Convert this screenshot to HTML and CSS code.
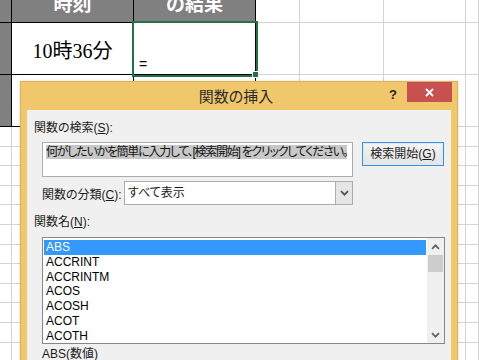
FILE: index.html
```html
<!DOCTYPE html>
<html lang="ja">
<head>
    <meta charset="UTF-8">
    <title>関数の挿入</title>
    <link rel="stylesheet" href="styles.css">
</head>
<body>
    <div class="screen">
        <div class="sheet">
            <div class="row row-head">
                <div class="cell c-a fill blk"></div>
                <div class="cell c-b fill blk head">時刻</div>
                <div class="cell c-c fill blk head">の結果</div>
                <div class="cell c-d"></div>
                <div class="cell c-e"></div>
                <div class="cell c-f"></div>
                <div class="cell c-g"></div>
            </div>
            <div class="row row-big">
                <div class="cell c-a fill blk"></div>
                <div class="cell c-b blk time">10時36分</div>
                <div class="cell c-c blk formula selected">=<span class="handle"></span></div>
                <div class="cell c-d"></div>
                <div class="cell c-e"></div>
                <div class="cell c-f"></div>
                <div class="cell c-g"></div>
            </div>
            <div class="row row-big">
                <div class="cell c-a fill blk"></div>
                <div class="cell c-b blk"></div>
                <div class="cell c-c blk"></div>
                <div class="cell c-d"></div>
                <div class="cell c-e"></div>
                <div class="cell c-f"></div>
                <div class="cell c-g"></div>
            </div>
            <div class="rows" id="rows"></div>
        </div>

        <div class="dialog">
            <div class="titlebar">
                <div class="title">関数の挿入</div>
                <div class="help">?</div>
                <div class="close">
                    <svg width="9" height="9" viewBox="0 0 9 9"><path d="M1 1L8 8M8 1L1 8" stroke="#fff" stroke-width="1.8" fill="none"/></svg>
                </div>
            </div>
            <div class="panel">
                <div class="label">関数の検索(<u>S</u>):</div>
                <div class="search-row">
                    <div class="search-box"><span class="picked">何がしたいかを簡単に入力して、[検索開始] をクリックしてください。</span></div>
                    <div class="btn">検索開始(<u>G</u>)</div>
                </div>
                <div class="cat-row">
                    <div class="cat-label">関数の分類(<u>C</u>):</div>
                    <div class="select">
                        <div class="select-text">すべて表示</div>
                        <div class="select-arrow">
                            <svg width="9" height="6" viewBox="0 0 9 6"><path d="M1 1.2L4.5 4.7L8 1.2" fill="none" stroke="#505050" stroke-width="1.7"/></svg>
                        </div>
                    </div>
                </div>
                <div class="label label-name">関数名(<u>N</u>):</div>
                <div class="listbox">
                    <ul class="items">
                        <li class="on">ABS</li>
                        <li>ACCRINT</li>
                        <li>ACCRINTM</li>
                        <li>ACOS</li>
                        <li>ACOSH</li>
                        <li>ACOT</li>
                        <li>ACOTH</li>
                    </ul>
                    <div class="scroll">
                        <div class="arrow">
                            <svg width="9" height="6" viewBox="0 0 9 6"><path d="M1 4.8L4.5 1.3L8 4.8" fill="none" stroke="#606060" stroke-width="1.7"/></svg>
                        </div>
                        <div class="thumb"></div>
                        <div class="track"></div>
                        <div class="arrow">
                            <svg width="9" height="6" viewBox="0 0 9 6"><path d="M1 1.2L4.5 4.7L8 1.2" fill="none" stroke="#606060" stroke-width="1.7"/></svg>
                        </div>
                    </div>
                </div>
                <div class="syntax">ABS(数値)</div>
            </div>
        </div>
    </div>

    <script>
        // plain grid rows below the bordered table
        const rows = document.getElementById('rows');
        const cols = ['c-a', 'c-b', 'c-c', 'c-d', 'c-e', 'c-f', 'c-g'];
        for (let i = 0; i < 13; i++) {
            rows.innerHTML += '<div class="row row-small">' +
                cols.map(c => `<div class="cell ${c}"></div>`).join('') + '</div>';
        }
    </script>
</body>
</html>
```

FILE: styles.css
```css
body {
    margin: 0;
    font-family: "Liberation Sans", "Noto Sans CJK JP", sans-serif;
    background: #fff;
}
.screen {
    position: relative;
    width: 479px;
    height: 360px;
    overflow: hidden;
}

/* spreadsheet */
.row {
    display: flex;
}
.row-head {
    height: 23px;
}
.row-big {
    height: 52px;
}
.row-small {
    height: 19.6px;
}
.cell {
    box-sizing: border-box;
    border-right: 1px solid #d4d4d4;
    border-bottom: 1px solid #d4d4d4;
    flex: none;
}
.c-a { width: 12px; }
.c-b { width: 122px; }
.c-c { width: 122px; }
.c-d { width: 44px; }
.c-e { width: 84px; }
.c-f { width: 82px; }
.c-g { flex: 1; }
.blk {
    border-color: #000;
}
.fill {
    background-color: #808080;
}
.head {
    color: #fff;
    font-family: "Noto Sans CJK JP", sans-serif;
    font-weight: 700;
    font-size: 19px;
    line-height: 6px;
    text-align: center;
    overflow: hidden;
}
.time {
    display: flex;
    align-items: center;
    justify-content: center;
    font-family: "Liberation Serif", "Noto Sans CJK JP", serif;
    font-size: 20px;
    color: #000;
    padding-top: 2px;
}
.formula {
    position: relative;
    display: flex;
    align-items: flex-end;
    padding: 0 0 2px 5px;
    font-size: 14px;
    color: #000;
}
.selected {
    outline: 2px solid #217346;
}
.handle {
    position: absolute;
    right: -4px;
    bottom: -4px;
    width: 5px;
    height: 5px;
    background-color: #217346;
    border: 1px solid #fff;
}

/* dialog */
.dialog {
    position: absolute;
    left: 20px;
    top: 81px;
    width: 438px;
    height: 300px;
    box-sizing: border-box;
    background-color: #f0c86b;
    border: 1px solid #dfb255;
    padding: 0 6px;
    box-shadow: 0 0 3px rgba(0, 0, 0, 0.15);
    font-family: "Liberation Sans", "Noto Sans CJK JP", sans-serif;
    font-size: 12px;
    font-feature-settings: "palt";
    color: #1a1a1a;
}
.titlebar {
    display: flex;
    align-items: flex-start;
    height: 28px;
}
.title {
    flex: 1;
    padding-left: 56px;
    text-align: center;
    font-family: "Noto Sans CJK JP", sans-serif;
    font-size: 15px;
    line-height: 28px;
    color: #2b2b2b;
}
.help {
    margin-right: 10px;
    font-weight: 700;
    font-size: 13px;
    line-height: 20px;
    padding-top: 3px;
    color: #222;
}
.close {
    width: 45px;
    height: 20px;
    margin-right: -1px;
    background-color: #c75050;
    display: flex;
    align-items: center;
    justify-content: center;
}
.panel {
    height: 260px;
    background-color: #f0f0f0;
    padding: 8px 7px 0;
}
.label {
    line-height: 20px;
}
.label-name {
    margin-top: 7px;
}
.search-row {
    display: flex;
    align-items: flex-start;
    margin: 4px 0 0 8px;
}
.search-box {
    box-sizing: border-box;
    width: 311px;
    height: 35px;
    border: 1px solid #acacac;
    background: #fff;
    padding: 2px 3px;
    line-height: 15px;
    white-space: nowrap;
    overflow: hidden;
}
.picked {
    background-color: #c8c8c8;
    color: #111;
    letter-spacing: -1.25px;
}
.btn {
    box-sizing: border-box;
    width: 82px;
    height: 24px;
    margin-left: 9px;
    border: 1px solid #3c8fd8;
    box-shadow: inset 0 0 0 1px #d8ecfb;
    background: linear-gradient(#f3f3f3, #e5e5e5);
    text-align: center;
    line-height: 22px;
}
.cat-row {
    display: flex;
    align-items: center;
    margin: 4px 0 0 8px;
}
.cat-label {
    width: 82px;
}
.select {
    box-sizing: border-box;
    display: flex;
    width: 229px;
    height: 24px;
    border: 1px solid #acacac;
    background: #fff;
}
.select-text {
    flex: 1;
    padding-left: 3px;
    line-height: 22px;
}
.select-arrow {
    box-sizing: border-box;
    width: 17px;
    border-left: 1px solid #acacac;
    background-color: #e6e6e6;
    display: flex;
    align-items: center;
    justify-content: center;
}
.listbox {
    box-sizing: border-box;
    display: flex;
    width: 403px;
    height: 107px;
    margin: 5px 0 0 8px;
    border: 1px solid #828790;
    background: #fff;
}
.items {
    flex: 1;
    list-style: none;
    margin: 0;
    padding: 2px 1px 0;
}
.items li {
    height: 14.75px;
    line-height: 14.75px;
    padding-left: 2px;
    color: #000;
}
.items li.on {
    background-color: #3399ff;
    color: #fff;
}
.scroll {
    width: 17px;
    background-color: #f0f0f0;
    display: flex;
    flex-direction: column;
    align-items: center;
}
.arrow {
    height: 17px;
    display: flex;
    align-items: center;
    justify-content: center;
}
.thumb {
    width: 15px;
    height: 17px;
    background-color: #cdcdcd;
}
.track {
    flex: 1;
}
.syntax {
    margin-left: 8px;
    line-height: 20px;
}
```
